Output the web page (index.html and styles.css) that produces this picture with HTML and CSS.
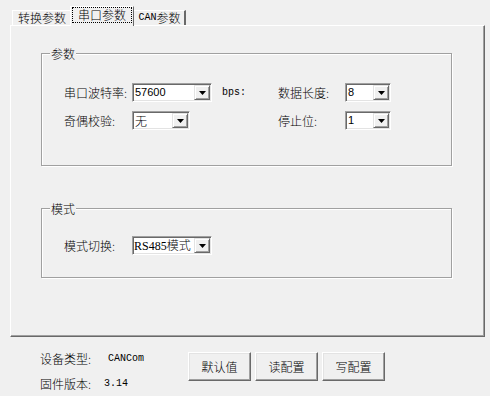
FILE: index.html
```html
<!DOCTYPE html>
<html lang="zh-CN">
  <head>
    <meta charset="UTF-8" />
    <title>参数配置</title>
    <link rel="stylesheet" href="styles.css">
  </head>
  <body>
    <div class="dialog">
      <div class="tabs">
        <div class="tab">转换参数</div>
        <div class="tab active"><span class="focus">串口参数</span></div>
        <div class="tab tab-last"><span class="mono">CAN</span>参数</div>
      </div>

      <div class="panel">
        <div class="group group-params">
          <div class="group-title">参数</div>
          <div class="rows">
            <div class="row">
              <div class="field field-left">
                <div class="field-label">串口波特率:</div>
                <div class="combo combo-wide">
                  <span class="combo-text">57600</span>
                  <span class="combo-btn"><svg width="7" height="4" viewBox="0 0 7 4"><polygon points="0,0 7,0 3.5,4" fill="#000"/></svg></span>
                </div>
                <span class="unit">bps:</span>
              </div>
              <div class="field">
                <div class="field-label field-label-right">数据长度:</div>
                <div class="combo combo-small">
                  <span class="combo-text">8</span>
                  <span class="combo-btn"><svg width="7" height="4" viewBox="0 0 7 4"><polygon points="0,0 7,0 3.5,4" fill="#000"/></svg></span>
                </div>
              </div>
            </div>
            <div class="row">
              <div class="field field-left">
                <div class="field-label">奇偶校验:</div>
                <div class="combo combo-mid">
                  <span class="combo-text combo-cjk">无</span>
                  <span class="combo-btn"><svg width="7" height="4" viewBox="0 0 7 4"><polygon points="0,0 7,0 3.5,4" fill="#000"/></svg></span>
                </div>
              </div>
              <div class="field">
                <div class="field-label field-label-right">停止位:</div>
                <div class="combo combo-small">
                  <span class="combo-text">1</span>
                  <span class="combo-btn"><svg width="7" height="4" viewBox="0 0 7 4"><polygon points="0,0 7,0 3.5,4" fill="#000"/></svg></span>
                </div>
              </div>
            </div>
          </div>
        </div>

        <div class="group group-mode">
          <div class="group-title">模式</div>
          <div class="rows rows-mode">
            <div class="row">
              <div class="field">
                <div class="field-label">模式切换:</div>
                <div class="combo combo-wide">
                  <span class="combo-text combo-serif">RS485<span class="combo-cjk">模式</span></span>
                  <span class="combo-btn"><svg width="7" height="4" viewBox="0 0 7 4"><polygon points="0,0 7,0 3.5,4" fill="#000"/></svg></span>
                </div>
              </div>
            </div>
          </div>
        </div>
      </div>

      <div class="footer">
        <div class="info">
          <div class="info-row">
            <span class="info-label">设备类型:</span>
            <span class="info-value info-value-type">CANCom</span>
          </div>
          <div class="info-row">
            <span class="info-label">固件版本:</span>
            <span class="info-value">3.14</span>
          </div>
        </div>
        <div class="buttons">
          <div class="btn">默认值</div>
          <div class="btn">读配置</div>
          <div class="btn">写配置</div>
        </div>
      </div>
    </div>
  </body>
</html>
```

FILE: styles.css
```css
* {
  margin: 0;
  padding: 0;
  box-sizing: border-box;
}

body {
  width: 490px;
  height: 396px;
  overflow: hidden;
  background-color: #f0f0f0;
  color: #000;
  font-family: "Noto Sans CJK SC", sans-serif;
  font-size: 12px;
  font-weight: 300;
}

.dialog {
  width: 490px;
  height: 396px;
}

.mono {
  font-family: "Liberation Mono", monospace;
  font-size: 10px;
  font-weight: 400;
}

/* Tab strip */
.tabs {
  display: flex;
  align-items: flex-end;
  height: 25px;
  padding-left: 12px;
}

.tab {
  width: 60px;
  height: 15px;
  border-top: 1px solid #fff;
  border-left: 1px solid #fff;
  border-right: 1px solid #a0a0a0;
  display: flex;
  justify-content: center;
  align-items: center;
  line-height: 14px;
  white-space: nowrap;
}

.tab.active {
  position: relative;
  z-index: 1;
  width: 64px;
  height: 20px;
  margin: 0 -2px -1px;
  background-color: #f0f0f0;
  border-right: 1px solid #696969;
  align-items: flex-start;
}

.focus {
  border: 1px dotted #000;
  padding: 0 5px;
  line-height: 14px;
}

.tab-last {
  width: 54px;
  padding-left: 2px;
  border-right: 2px solid #696969;
}

/* Tab body */
.panel {
  width: 475px;
  height: 312px;
  margin-left: 10px;
  border-top: 1px solid #fff;
  border-left: 1px solid #fff;
  border-right: 1px solid #696969;
  border-bottom: 1px solid #696969;
  box-shadow: inset -1px -1px 0 #a0a0a0;
  padding: 27px 0 0 30px;
}

.group {
  width: 411px;
  border: 1px solid #a0a0a0;
  box-shadow: 1px 1px 0 #fff, inset 1px 1px 0 #fff;
  padding-left: 22px;
}

.group-params {
  height: 113px;
}

.group-mode {
  height: 70px;
  margin-top: 42px;
}

.group-title {
  width: fit-content;
  margin: -8px 0 0 -14px;
  padding: 0 1px;
  line-height: 15px;
  background-color: #f0f0f0;
}

.rows {
  display: grid;
  row-gap: 9px;
  margin-top: 22px;
}

.rows-mode {
  margin-top: 20px;
}

.row {
  display: flex;
  align-items: center;
  height: 19px;
}

.field {
  display: flex;
  align-items: center;
}

.field-left {
  width: 214px;
}

.field-label {
  width: 68px;
  white-space: nowrap;
}

.field-label-right {
  width: 67px;
}

.unit {
  margin-left: 10px;
  font-family: "Liberation Mono", monospace;
  font-size: 10px;
  font-weight: 400;
}

/* Drop-down list */
.combo {
  height: 19px;
  display: flex;
  align-items: center;
  justify-content: space-between;
  padding: 1px;
  background-color: #fff;
  border: 1px solid;
  border-color: #a0a0a0 #fff #fff #a0a0a0;
  box-shadow: inset 1px 1px 0 #696969, inset -1px -1px 0 #e3e3e3;
}

.combo-wide {
  width: 80px;
}

.combo-mid {
  width: 58px;
}

.combo-small {
  width: 46px;
}

.combo-text {
  padding-left: 1px;
  font-family: "Liberation Sans", Arial, sans-serif;
  font-size: 11px;
  font-weight: 400;
  line-height: 13px;
  white-space: nowrap;
}

.combo-cjk {
  font-family: "Noto Sans CJK SC", sans-serif;
  font-size: 12px;
  font-weight: 300;
}

.combo-serif {
  font-family: "Liberation Serif", serif;
  font-size: 12px;
  padding-left: 0;
}

.combo-btn {
  width: 16px;
  height: 15px;
  display: flex;
  justify-content: center;
  align-items: center;
  background-color: #f0f0f0;
  border: 1px solid;
  border-color: #e3e3e3 #696969 #696969 #e3e3e3;
  box-shadow: inset 1px 1px 0 #fff, inset -1px -1px 0 #a0a0a0;
}

/* Bottom info + buttons */
.footer {
  display: flex;
  padding: 15px 0 0 40px;
}

.info {
  width: 148px;
  display: grid;
  row-gap: 12px;
}

.info-row {
  display: flex;
  align-items: center;
  height: 13px;
  white-space: nowrap;
}

.info-label {
  width: 64px;
}

.info-value {
  font-family: "Liberation Mono", monospace;
  font-size: 10px;
  font-weight: 400;
}

.info-value-type {
  padding-left: 4px;
}

.buttons {
  display: flex;
  gap: 4px;
}

.btn {
  width: 63px;
  height: 29px;
  display: flex;
  justify-content: center;
  align-items: center;
  border: 1px solid;
  border-color: #fff #696969 #696969 #fff;
  box-shadow: inset -1px -1px 0 #a0a0a0, inset 1px 1px 0 #e3e3e3;
  font-size: 12px;
}
```
